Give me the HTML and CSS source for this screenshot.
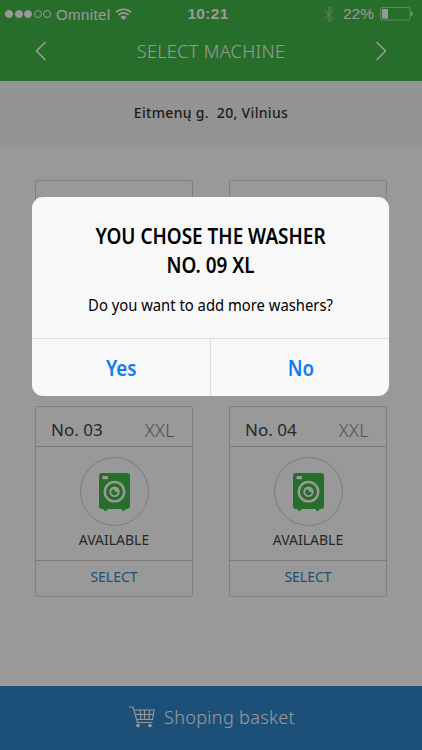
FILE: index.html
```html
<!DOCTYPE html>
<html lang="en">
<head>
  <meta charset="UTF-8">
  <meta name="viewport" content="width=device-width, initial-scale=1.0">
  <title>Select Machine</title>
  <link rel="stylesheet" href="styles.css">
</head>
<body>
  <svg class="defs" width="0" height="0">
    <symbol id="washer" viewBox="0 0 31 38">
      <path fill="#43b749" d="M3 0h25a3 3 0 0 1 3 3v30a3 3 0 0 1-3 3h-1.500a2 2 0 0 1-4 0H8.500a2 2 0 0 1-4 0H3a3 3 0 0 1-3-3V3a3 3 0 0 1 3-3z"/>
      <rect x="3.500" y="3" width="5.500" height="3.300" rx=".7" fill="#fff"/>
      <circle cx="15.500" cy="18.700" r="9.700" fill="none" stroke="#fff" stroke-width="2.400"/>
      <circle cx="15.500" cy="18.700" r="5.200" fill="#fff"/>
      <path fill="#43b749" d="M15 16.200c.5 2.300 1.700 3 3.800 2.900-.2 2-1.500 3.200-3.300 3.200-2 0-3.500-1.500-3.300-3.500.2-1.500 1.200-2.500 2.800-2.600z"/>
    </symbol>
  </svg>

  <div class="app">
    <header class="header">
      <div class="status">
        <div class="status-left">
          <span class="signal"><i class="on"></i><i class="on"></i><i class="on"></i><i></i><i></i></span>
          <span class="carrier">Omnitel</span>
          <svg class="wifi" width="17" height="12" viewBox="0 0 17 12" fill="none" stroke="#fff" stroke-width="1.700">
            <path d="M1 4.200a11 11 0 0 1 15 0M3.500 6.900a7.300 7.300 0 0 1 10 0"/>
            <path fill="#fff" stroke="none" d="M5.300 9a4.600 4.600 0 0 1 6.400 0L8.500 12z"/>
          </svg>
        </div>
        <span class="time">10:21</span>
        <div class="status-right">
          <svg class="bluetooth" width="10" height="17" viewBox="0 0 10 17" fill="none" stroke="#fff" stroke-width="1">
            <path d="M.5 4.500l8.500 8-4 3.500V1l4 3.500-8.500 8"/>
          </svg>
          <span class="percent">22%</span>
          <svg class="battery" width="33" height="14" viewBox="0 0 33 14">
            <rect x=".5" y=".5" width="29.500" height="12.500" rx="1.500" fill="none" stroke="#fff" stroke-opacity=".55"/>
            <rect x="2" y="2" width="6" height="9.500" fill="#fff"/>
            <path d="M31 4.500c2 .5 2 4 0 4.500z" fill="#fff"/>
          </svg>
        </div>
      </div>
      <nav class="nav">
        <svg width="12" height="20" viewBox="0 0 12 20"><path d="M10.500 1L1.500 10l9 9"/></svg>
        <h1>SELECT MACHINE</h1>
        <svg width="12" height="20" viewBox="0 0 12 20"><path d="M1.500 1l9 9-9 9"/></svg>
      </nav>
    </header>

    <div class="address">Eitmenų g. &nbsp;20, Vilnius</div>

    <main class="machines">
      <div class="card">
        <div class="card-head"><span>No. 01</span><span class="size">XXL</span></div>
      </div>
      <div class="card">
        <div class="card-head"><span>No. 02</span><span class="size">XXL</span></div>
      </div>
      <div class="card">
        <div class="card-head"><span>No. 03</span><span class="size">XXL</span></div>
        <div class="card-body">
          <div class="circle"><svg width="31" height="38"><use href="#washer"/></svg></div>
          <p>AVAILABLE</p>
        </div>
        <a class="select">SELECT</a>
      </div>
      <div class="card">
        <div class="card-head"><span>No. 04</span><span class="size">XXL</span></div>
        <div class="card-body">
          <div class="circle"><svg width="31" height="38"><use href="#washer"/></svg></div>
          <p>AVAILABLE</p>
        </div>
        <a class="select">SELECT</a>
      </div>
    </main>

    <footer class="basket">
      <svg width="26" height="22" viewBox="0 0 26 22" fill="none" stroke="#fff" stroke-width="1.100">
        <path d="M0 1h4l4.500 15.500h15M5 4h20l-1.500 9.500H7.500M6 8.500h18.500M11 4l1 9.500M15.500 4v9.500M20.500 4l-.5 9.500"/>
        <circle cx="9" cy="19.500" r="1.300" fill="#fff"/>
        <circle cx="21" cy="19.500" r="1.300" fill="#fff"/>
      </svg>
      <span>Shoping basket</span>
    </footer>
  </div>

  <div class="overlay">
    <div class="modal">
      <div class="modal-text">
        <h2>YOU CHOSE THE WASHER<br>NO. 09 XL</h2>
        <p>Do you want to add more washers?</p>
      </div>
      <div class="modal-buttons">
        <button><span>Yes</span></button>
        <button><span>No</span></button>
      </div>
    </div>
  </div>
</body>
</html>
```
FILE: styles.css
```css
* {
  box-sizing: border-box;
}
body {
  margin: 0;
  font-family: 'Noto Sans', sans-serif;
  background: #fff;
}
h1, h2, p {
  margin: 0;
}
.defs {
  position: absolute;
}
.app {
  height: 750px;
  display: flex;
  flex-direction: column;
  overflow: hidden;
}
.header {
  height: 81px;
  background: #43b749;
  color: #fff;
}
.status {
  height: 28px;
  padding: 0 9px 0 5px;
  display: grid;
  grid-template-columns: 1fr auto 1fr;
  align-items: center;
  font-family: 'Liberation Sans', sans-serif;
  font-size: 15px;
}
.status-left, .status-right {
  display: flex;
  align-items: center;
}
.status-right {
  justify-content: flex-end;
}
.signal {
  display: flex;
  gap: 1.500px;
  margin-right: 5px;
}
.signal i {
  width: 8px;
  height: 8px;
  border: 1px solid #fff;
  border-radius: 50%;
}
.signal .on {
  background: #fff;
}
.carrier {
  letter-spacing: 0.400px;
}
.wifi {
  margin-left: 5px;
}
.time {
  margin-right: 2px;
  font-weight: bold;
  font-size: 15.500px;
  letter-spacing: 0.300px;
}
.bluetooth {
  opacity: 0.500;
  margin-right: 9px;
}
.percent {
  margin-right: 6px;
  font-size: 15.500px;
}
.nav {
  height: 46px;
  padding: 0 35px;
  display: flex;
  align-items: center;
  justify-content: space-between;
}
.nav svg {
  fill: none;
  stroke: #fff;
  stroke-width: 1.600;
}
.nav h1 {
  font-size: 18px;
  font-weight: 300;
  letter-spacing: 0.350px;
}
.address {
  height: 64px;
  line-height: 64px;
  background: #f5f5f5;
  text-align: center;
  font-size: 14px;
  font-weight: 500;
  letter-spacing: 0.320px;
  color: #333;
}
.machines {
  flex: 1;
  padding: 35px 35px 0;
  display: grid;
  grid-template-columns: 158px 158px;
  grid-auto-rows: 191px;
  justify-content: space-between;
  align-content: start;
  row-gap: 35px;
}
.card {
  border: 1px solid #d6d6d6;
  border-radius: 2px;
  display: flex;
  flex-direction: column;
  color: #444;
}
.card-head {
  height: 40px;
  padding: 7px 17px 0 15px;
  border-bottom: 1px solid #ccc;
  display: flex;
  justify-content: space-between;
  font-size: 17px;
  line-height: 32px;
}
.card-head .size {
  font-weight: 300;
  font-size: 18px;
  letter-spacing: 0.400px;
  color: #888;
}
.card-body {
  flex: 1;
  padding-top: 10px;
  display: flex;
  flex-direction: column;
  align-items: center;
}
.circle {
  width: 69px;
  height: 69px;
  border: 1px solid #d0d0d0;
  border-radius: 50%;
  display: flex;
  align-items: center;
  justify-content: center;
}
.card-body p {
  margin-top: 3px;
  font-size: 14px;
  line-height: 22px;
}
.select {
  height: 36px;
  border-top: 1px solid #ccc;
  text-align: center;
  font-size: 14px;
  line-height: 32px;
  color: #2f86c8;
}
.basket {
  height: 64px;
  padding: 0 0 2px 2px;
  background: #2f86c8;
  color: #fff;
  display: flex;
  align-items: center;
  justify-content: center;
  gap: 9px;
  font-size: 18px;
  font-weight: 300;
  letter-spacing: 0.350px;
}
.overlay {
  position: absolute;
  inset: 0;
  height: 750px;
  padding: 197px 33px 0 32px;
  background: rgba(0, 0, 0, 0.400);
}
.modal {
  height: 199px;
  background: #f8f8f8;
  border-radius: 11px;
  overflow: hidden;
  display: flex;
  flex-direction: column;
  text-align: center;
  color: #000;
}
.modal-text {
  height: 141px;
  padding-top: 24px;
}
.modal h2 {
  font-size: 21.500px;
  font-weight: 600;
  line-height: 29px;
  transform: scaleX(0.880);
}
.modal p {
  margin-top: 14px;
  font-size: 16px;
  line-height: 24px;
  transform: scaleX(0.925);
}
.modal-buttons {
  flex: 1;
  border-top: 1px solid #dedede;
  display: flex;
}
.modal button {
  flex: 1;
  padding: 0 0 0 1px;
  border: none;
  background: none;
  font: 600 21px 'Noto Sans', sans-serif;
  color: #127bf0;
}
.modal button span {
  display: inline-block;
  transform: scaleX(0.890);
}
.modal button + button {
  border-left: 1px solid #dedede;
}
```
